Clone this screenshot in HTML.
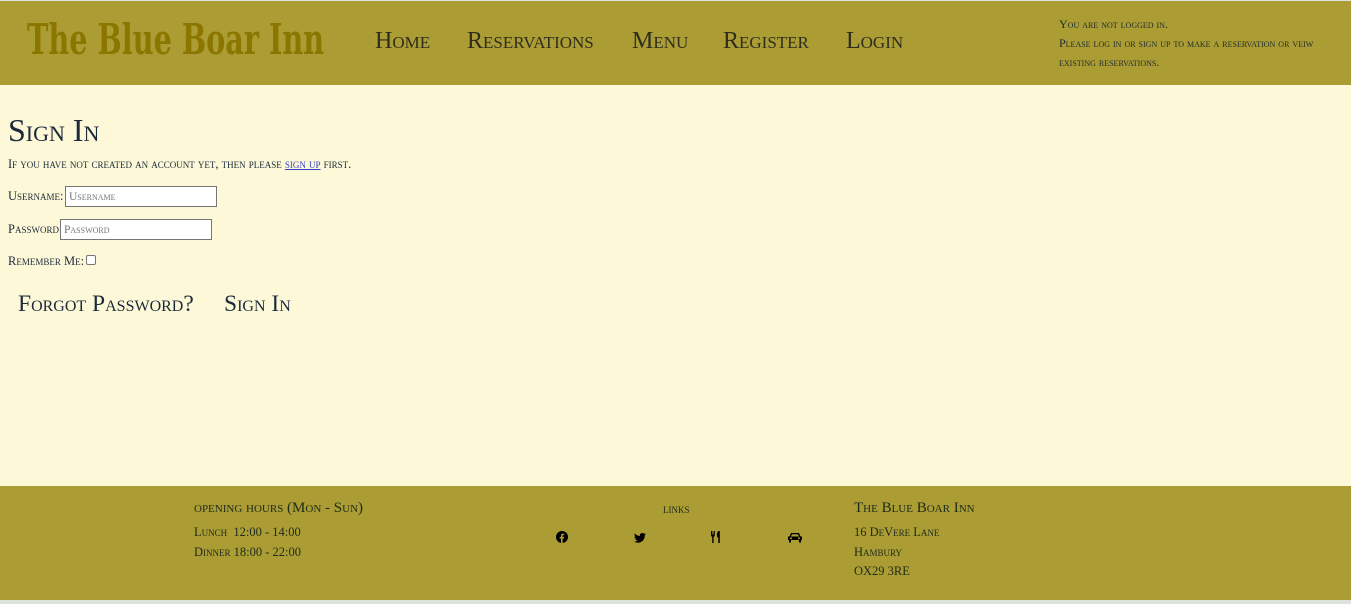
<!DOCTYPE html>
<html><head><style>
*{margin:0;padding:0;box-sizing:border-box}
body{width:1351px;height:604px;background:#dde3dc;font-family:"Liberation Serif",serif;font-variant:small-caps;color:#1b2a3a;position:relative;overflow:hidden}
header{position:absolute;left:0;top:1px;width:1351px;height:84px;background:#ab9c34}
.logo{position:absolute;left:27px;top:14px;font-size:42px;font-weight:bold;color:#8b7700;font-variant:normal;transform:scaleX(0.76);transform-origin:left;font-family:"DejaVu Serif Condensed","Liberation Serif",serif}
nav a{position:absolute;top:27px;font-size:24px;color:#2e2e1e;text-decoration:none}
.st{position:absolute;left:1059px;top:14px;font-size:12px;line-height:19px;color:#1e2c2c}
main{position:absolute;top:85px;left:0;width:1351px;height:401px;background:#fdf8d8}
h1{position:absolute;left:8px;top:27px;font-size:32px;font-weight:normal}
.p{position:absolute;left:8px;font-size:12.5px}
input.t{position:absolute;height:21px;border:1px solid #767676;background:#fff;font-family:"Liberation Serif",serif;font-variant:small-caps;font-size:11.5px;padding-left:3px;color:#666}
.cb{position:absolute;left:86px;top:170px;width:10px;height:10px;border:1px solid #767676;border-radius:2px;background:#fff}
.b{position:absolute;top:206px;font-size:23.5px}
footer{position:absolute;top:486px;left:0;width:1351px;height:114px;background:#ab9c34;color:#1e2c1a}
footer div{position:absolute;font-size:12.5px}
</style></head><body>
<header>
<div class="logo">The Blue Boar Inn</div>
<nav><a style="left:375px">Home</a><a style="left:467px">Reservations</a><a style="left:632px">Menu</a><a style="left:723px">Register</a><a style="left:846px">Login</a></nav>
<div class="st">You are not logged in.<br>Please log in or sign up to make a reservation or veiw<br>existing reservations.</div>
</header>
<main>
<h1>Sign In</h1>
<div class="p" style="top:72px">If you have not created an account yet, then please <span style="color:#3344cc;text-decoration:underline">sign up</span> first.</div>
<div class="p" style="top:104px">Username:</div>
<input class="t" style="left:65px;top:101px;width:152px" placeholder="Username">
<div class="p" style="top:137px">Password:</div>
<input class="t" style="left:60px;top:134px;width:152px" placeholder="Password">
<div class="p" style="top:169px">Remember Me:</div>
<div class="cb"></div>
<div class="b" style="left:18px">Forgot Password?</div>
<div class="b" style="left:224px">Sign In</div>
</main>
<footer>
<div style="left:194px;top:14px;font-size:15px">opening hours (Mon - Sun)</div>
<div style="left:194px;top:39px">Lunch&nbsp; 12:00 - 14:00</div>
<div style="left:194px;top:59px">Dinner 18:00 - 22:00</div>
<div style="left:663px;top:16px">links</div>
<div style="left:556px;top:45px">
<svg width="12" height="12" viewBox="0 0 12 12"><circle cx="6" cy="6" r="6" fill="#000"/><path d="M6.6 12V7.5H8l.2-1.6H6.6v-1c0-.5.2-.8.8-.8h.8V2.7c-.4 0-.8-.1-1.2-.1-1.2 0-2 .7-2 2v1.3H3.7v1.6H5V12z" fill="#ab9c34"/></svg></div>
<div style="left:634px;top:46px"><svg width="12" height="10" viewBox="0 0 24 20"><path d="M24 2.4a10 10 0 0 1-2.8.8A5 5 0 0 0 23.3.4a10 10 0 0 1-3.1 1.2A4.9 4.9 0 0 0 11.8 6 14 14 0 0 1 1.7.9a4.9 4.9 0 0 0 1.5 6.6A4.9 4.9 0 0 1 1 6.9a4.9 4.9 0 0 0 3.9 4.8 4.9 4.9 0 0 1-2.2.1 4.9 4.9 0 0 0 4.6 3.4A9.9 9.9 0 0 1 0 17.2 14 14 0 0 0 7.5 19.4c9.1 0 14-7.5 14-14v-.6A10 10 0 0 0 24 2.4z" fill="#000"/></svg></div>
<div style="left:711px;top:45px"><svg width="11" height="12" viewBox="0 0 11 12"><path d="M0 0v4c0 1 .6 1.6 1.2 1.8V12h1.4V5.8C3.2 5.6 3.8 5 3.8 4V0H3v3.5h-.6V0h-.8v3.5H1V0zM8 0C6.6 0 6 2 6 4.5c0 1.2.5 2 1.3 2.2V12h1.5V0z" fill="#000"/></svg></div>
<div style="left:788px;top:46px"><svg width="14" height="11" viewBox="0 0 14 11"><path d="M3 1h8l1.5 3.5H14V8h-1v2.5h-2V8H3v2.5H1V8H0V4.5h1.5zM4 2.3 3 4.5h8L10 2.3z" fill="#000"/><circle cx="3" cy="6.2" r="1" fill="#ab9c34"/><circle cx="11" cy="6.2" r="1" fill="#ab9c34"/></svg></div>
<div style="left:854px;top:14px;font-size:15px">The Blue Boar Inn</div>
<div style="left:854px;top:39px">16 DeVere Lane</div>
<div style="left:854px;top:59px">Hambury</div>
<div style="left:854px;top:78px">OX29 3RE</div>
</footer>
</body></html>
